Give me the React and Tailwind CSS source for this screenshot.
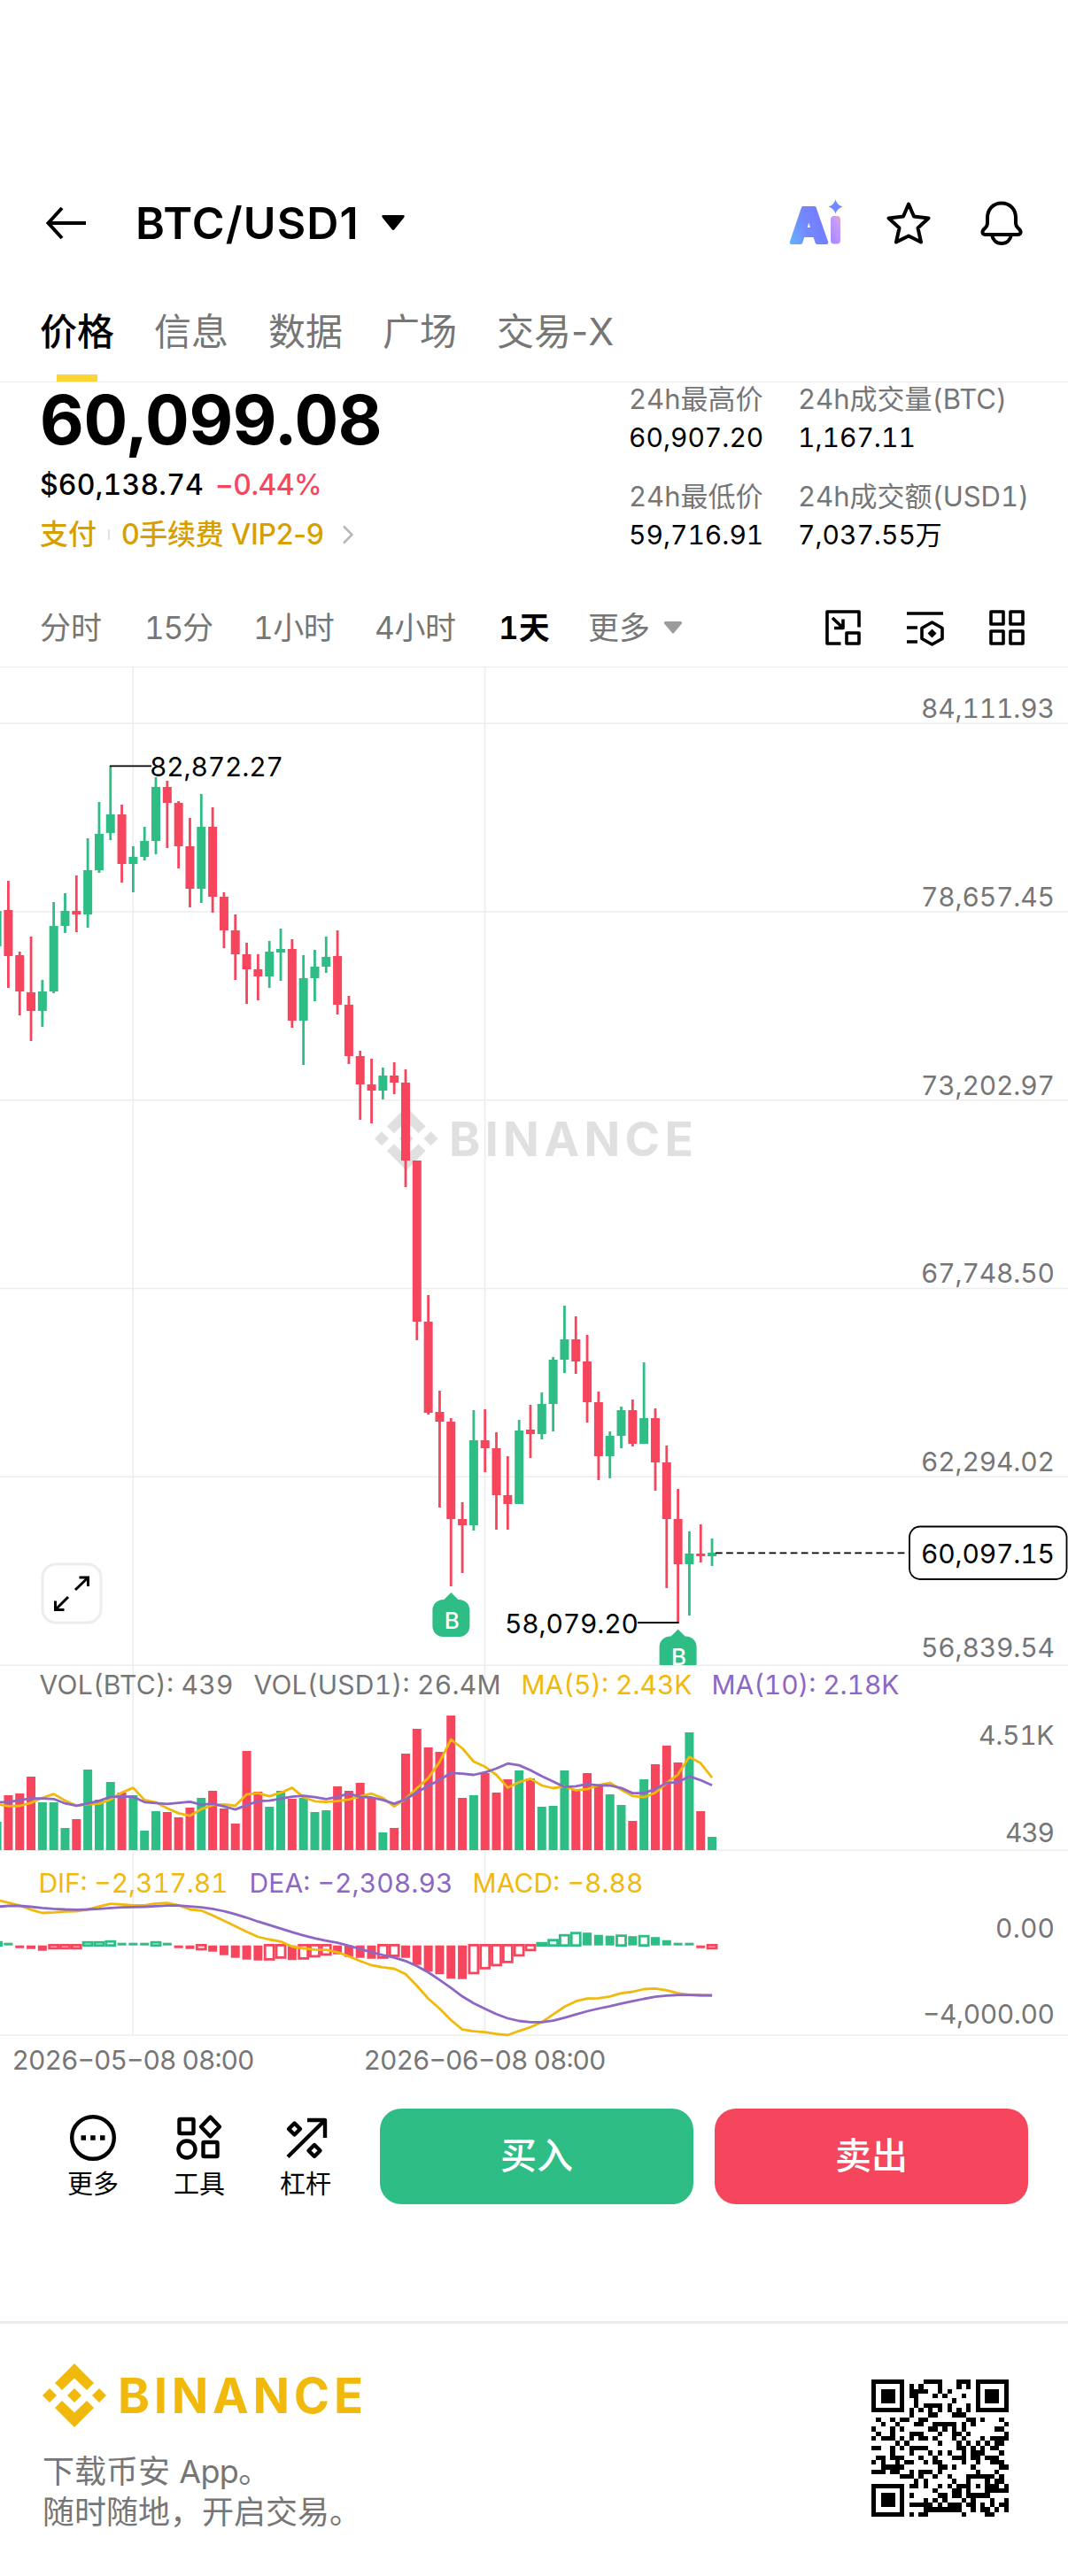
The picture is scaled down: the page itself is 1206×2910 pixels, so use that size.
import { useState } from 'react'

const UP = '#2ebd85'
const DOWN = '#f6465d'
const YELLOW = '#f0b90b'
const PURPLE = '#8d67c4'
const GREY = '#767676'

const STEP = 12.817
const X0 = 9.4
const VOL_BASE = 2090
const MACD_ZERO = 2197.7

// [up?, high, bodyTop, bodyBottom, low, volume]
const candles = [
  [1, 1029, 1029, 1069, 1069, 32], [0, 995, 1028, 1080, 1116, 62], [0, 1075, 1079, 1120, 1147, 64],
  [0, 1058, 1121, 1142, 1176, 83], [1, 1107, 1120, 1142, 1160, 54], [1, 1019, 1046, 1120, 1122, 54],
  [1, 1009, 1029, 1046, 1054, 25], [0, 989, 1029, 1033, 1053, 35], [1, 947, 983, 1033, 1048, 91],
  [1, 906, 942, 983, 986, 57], [1, 865, 920, 941, 949, 77], [0, 909, 920, 976, 997, 65],
  [1, 956, 968, 976, 1008, 62], [1, 934, 950, 968, 972, 22], [1, 878, 889, 950, 965, 44],
  [0, 882, 889, 907, 958, 43], [0, 905, 907, 956, 981, 37], [0, 924, 956, 1004, 1025, 48],
  [1, 897, 934, 1004, 1020, 59], [0, 912, 934, 1013, 1031, 67], [0, 1008, 1013, 1051, 1071, 47],
  [0, 1033, 1051, 1078, 1107, 30], [0, 1065, 1078, 1095, 1134, 112], [0, 1078, 1095, 1103, 1130, 66],
  [1, 1063, 1075, 1103, 1116, 49], [1, 1049, 1072, 1076, 1108, 67], [0, 1061, 1072, 1153, 1161, 58],
  [1, 1079, 1105, 1153, 1203, 59], [1, 1073, 1092, 1105, 1131, 43], [1, 1058, 1081, 1092, 1099, 45],
  [0, 1051, 1080, 1135, 1146, 72], [0, 1125, 1135, 1193, 1202, 67], [0, 1187, 1193, 1225, 1265, 76],
  [0, 1196, 1225, 1232, 1269, 59], [1, 1206, 1215, 1232, 1242, 20], [0, 1200, 1215, 1223, 1236, 25],
  [0, 1208, 1223, 1311, 1341, 109], [0, 1311, 1311, 1493, 1514, 137], [0, 1463, 1493, 1596, 1598, 116],
  [0, 1571, 1595, 1606, 1703, 111], [0, 1602, 1606, 1716, 1792, 152], [0, 1697, 1716, 1723, 1777, 59],
  [1, 1593, 1627, 1723, 1729, 62], [0, 1592, 1627, 1636, 1663, 87], [0, 1618, 1636, 1689, 1728, 65],
  [0, 1645, 1689, 1699, 1728, 80], [1, 1604, 1616, 1699, 1699, 90], [0, 1587, 1615, 1620, 1647, 81],
  [1, 1573, 1586, 1620, 1626, 49], [1, 1533, 1536, 1586, 1617, 50], [1, 1475, 1513, 1536, 1551, 90],
  [0, 1487, 1513, 1538, 1552, 68], [0, 1508, 1538, 1584, 1607, 87], [0, 1572, 1584, 1645, 1672, 72],
  [1, 1617, 1622, 1645, 1670, 63], [1, 1589, 1593, 1622, 1636, 51], [0, 1581, 1593, 1631, 1634, 33],
  [1, 1539, 1602, 1631, 1631, 80], [0, 1591, 1602, 1652, 1684, 97], [0, 1633, 1652, 1716, 1794, 118],
  [0, 1682, 1716, 1767, 1834, 99], [1, 1730, 1755, 1767, 1825, 133], [0, 1722, 1755, 1758, 1765, 44],
  [1, 1738, 1754, 1758, 1769, 15],
]

// volumes just left of the visible range, needed for the averages
const history = [60, 44, 63, 54, 60, 74, 62, 66, 26]

const hist = [
  5, 3, -3, -4, -6, -5, -5, -5, 5, 5, 6, 3, 3, 3, 5, 3, -3, -4, -6, -7, -11, -14, -16, -17, -17.5, -15.5,
  -16.5, -16.5, -14, -12, -10, -13, -14, -15, -15.5, -13.5, -14, -22, -29.5, -32.5, -37.5, -38, -33, -27.5,
  -24, -20.5, -13, -7, 4, 7.5, 13, 15.5, 14.5, 12, 11, 12.5, 10.5, 12, 9.5, 6, 3, 3, -3, -5,
]
const hollow = new Set([-1, 4, 5, 6, 7, 8, 9, 13, 17, 23, 24, 26, 27, 28, 33, 34, 41, 42, 43, 44, 45, 46, 47, 48, 49, 50, 54, 56, 62])

// thirds of a pixel below y=1870
const dif = [
  829, 838, 848, 862, 873, 871, 868, 867, 861, 851, 842, 844, 847, 847, 841, 839, 847, 861, 865, 881, 899,
  918, 937, 954, 963, 970, 987, 993, 997, 998, 1006, 1020, 1036, 1050, 1057, 1062, 1080, 1120, 1163, 1197,
  1236, 1268, 1274, 1277, 1283, 1287, 1273, 1260, 1243, 1217, 1191, 1172, 1163, 1162, 1156, 1145, 1140,
  1131, 1129, 1135, 1145, 1150, 1152, 1153,
]
const dea = [
  852, 849, 849, 852, 856, 859, 861, 862, 861, 859, 856, 854, 853, 852, 850, 848, 848, 851, 854, 859, 867,
  877, 889, 902, 914, 926, 938, 949, 959, 967, 974, 984, 995, 1006, 1016, 1024, 1036, 1053, 1074, 1100,
  1127, 1156, 1179, 1198, 1216, 1230, 1239, 1243, 1243, 1238, 1228, 1217, 1206, 1197, 1189, 1180, 1172,
  1164, 1157, 1153, 1151, 1151, 1152, 1152,
]

const xAt = i => X0 + (i - 1) * STEP
const toPoints = ys => ys.map((y, i) => `${xAt(i).toFixed(1)},${y.toFixed(1)}`).join(' ')

function movingAverage(n) {
  const all = [...history, ...candles.map(c => c[5])]
  return candles.map((_, i) => {
    const end = i + history.length + 1
    const part = all.slice(end - n, end)
    return VOL_BASE - part.reduce((a, b) => a + b, 0) / part.length
  })
}

const tabs = ['价格', '信息', '数据', '广场', '交易-X']

const stats = [
  { label: '24h最高价', value: '60,907.20' },
  { label: '24h成交量(BTC)', value: '1,167.11' },
  { label: '24h最低价', value: '59,716.91' },
  { label: '24h成交额(USD1)', value: '7,037.55万' },
]

const priceAxis = [
  ['84,111.93', 811], ['78,657.45', 1024], ['73,202.97', 1237],
  ['67,748.50', 1449], ['62,294.02', 1662], ['56,839.54', 1872],
]

const legends = [
  ['VOL(BTC): 439', 44.5, 1914, 219, GREY],
  ['VOL(USD1): 26.4M', 286.5, 1914, 279, GREY],
  ['MA(5): 2.43K', 588.5, 1914, 193, YELLOW],
  ['MA(10): 2.18K', 803.5, 1914, 212, PURPLE],
  ['DIF: −2,317.81', 43.5, 2138, 214, YELLOW],
  ['DEA: −2,308.93', 281.5, 2138, 230, PURPLE],
  ['MACD: −8.88', 533.5, 2138, 193, YELLOW],
]

function ChartText({ x, y, w, fill = GREY, children }) {
  return (
    <text x={x} y={y} textLength={w} fill={fill} fontSize="30">
      {children}
    </text>
  )
}

function BinanceMark({ x, y, size, className }) {
  return (
    <svg x={x} y={y} width={size} height={size} viewBox="0 0 72 72" className={className} fill="currentColor">
      <path d="M36 0 58 22 50 30 36 16.5 22 30 14 22ZM36 72 58 50 50 42 36 55.5 22 42 14 50ZM0 36 8 28 16 36 8 44ZM56 36 64 28 72 36 64 44ZM28 36 36 28 44 36 36 44Z" />
    </svg>
  )
}

function BuyMarker({ x, y }) {
  return (
    <g>
      <path
        d={`M${x} ${y} l8 8 h1 a12 12 0 0 1 12 12 v18 a12 12 0 0 1 -12 12 h-18 a12 12 0 0 1 -12 -12 v-18 a12 12 0 0 1 12 -12 h1 z`}
        fill={UP}
      />
      <text x={x + 1} y={y + 40.5} textAnchor="middle" fontSize="26" fontWeight="500" fill="#fff">B</text>
    </g>
  )
}

function Chart() {
  return (
    <svg width="1206" height="1606" viewBox="0 754 1206 1606" className="block shrink-0 tabular-nums">
      <defs>
        <clipPath id="main"><rect x="0" y="754" width="1206" height="1127" /></clipPath>
      </defs>

      <g stroke="#ededed" strokeWidth="1.6">
        {[817.2, 1030, 1242.7, 1455.5, 1668.3, 1881.3, 2090.3, 2299].map(y => (
          <line key={y} x1="0" x2="1206" y1={y} y2={y} />
        ))}
        {[150.3, 547.6].map(x => (
          <line key={x} x1={x} x2={x} y1="754" y2="2299" />
        ))}
      </g>

      <BinanceMark x={423} y={1250.5} size={71.5} className="text-[#e0e0e0]" />
      <text x="507" y="1305.5" textLength="276" fontSize="53.5" fontWeight="700" fill="#e0e0e0">BINANCE</text>

      {candles.map(([up, high, top, bottom, low], i) => (
        <g key={i} fill={up ? UP : DOWN}>
          <rect x={xAt(i) - 1.4} y={high} width="2.8" height={low - high} />
          <rect x={xAt(i) - 5} y={top} width="10" height={bottom - top} />
        </g>
      ))}

      {priceAxis.map(([label, y]) => (
        <ChartText key={label} x={1040} y={y} w={151}>{label}</ChartText>
      ))}

      <path d="M124 865.3H171M720 1833H766.5" stroke="#000" strokeWidth="1.8" />
      <ChartText x={169} y={876.5} w={151} fill="#000">82,872.27</ChartText>
      <ChartText x={570} y={1844.5} w={151} fill="#000">58,079.20</ChartText>

      <g clipPath="url(#main)">
        <BuyMarker x={509.4} y={1799} />
        <BuyMarker x={765.6} y={1840.6} />
      </g>

      <line x1="808" x2="1026" y1="1754.3" y2="1754.3" stroke="#000" strokeWidth="1.8" strokeDasharray="7.7 4.4" />
      <rect x="1027" y="1724.5" width="177.5" height="59.5" rx="12" fill="#fff" stroke="#000" strokeWidth="1.8" />
      <ChartText x={1040} y={1765.5} w={151} fill="#000">60,097.15</ChartText>

      <rect x="48" y="1767" width="66" height="66" rx="15" fill="#fff" stroke="#ededed" strokeWidth="3" />
      <path d="M85 1796 99.5 1782M89.5 1782H99.5V1792M77 1804 62.5 1818.5M62.5 1808.5V1818.5H72.5" fill="none" stroke="#000" strokeWidth="3" />

      {candles.map(([up, , , , , vol], i) => (
        <rect key={i} x={xAt(i) - 5} y={VOL_BASE - vol} width="10" height={vol} fill={up ? UP : DOWN} />
      ))}
      <g fill="none" strokeWidth="2.8" strokeLinejoin="round">
        <polyline points={toPoints(movingAverage(5))} stroke={YELLOW} />
        <polyline points={toPoints(movingAverage(10))} stroke={PURPLE} />
      </g>

      {hist.map((v, i) => {
        const color = v > 0 ? UP : DOWN
        const h = Math.abs(v)
        if (hollow.has(i - 1)) {
          const y = v > 0 ? MACD_ZERO - h + 1.5 : MACD_ZERO - 0.3
          return <rect key={i} x={xAt(i) - 5} y={y} width="10" height={h - 1.5} fill="#fff" stroke={color} strokeWidth="2.8" />
        }
        return <rect key={i} x={xAt(i) - 5} y={v > 0 ? MACD_ZERO - h : MACD_ZERO} width="10" height={h} fill={color} />
      })}
      <g fill="none" strokeWidth="2.8" strokeLinejoin="round">
        <polyline points={toPoints(dif.map(v => 1870 + v / 3))} stroke={YELLOW} />
        <polyline points={toPoints(dea.map(v => 1870 + v / 3))} stroke={PURPLE} />
      </g>

      {legends.map(([label, x, y, w, color]) => (
        <ChartText key={label} x={x} y={y} w={w} fill={color}>{label}</ChartText>
      ))}

      <ChartText x={1105} y={1970.7} w={85.5}>4.51K</ChartText>
      <ChartText x={1135} y={2080.7} w={56}>439</ChartText>
      <ChartText x={1124} y={2189} w={67}>0.00</ChartText>
      <ChartText x={1042} y={2285.5} w={149}>−4,000.00</ChartText>
      <ChartText x={13.5} y={2337.5} w={274}>2026−05−08 08:00</ChartText>
      <ChartText x={410.5} y={2337.5} w={274}>2026−06−08 08:00</ChartText>
    </svg>
  )
}

function AiLogo() {
  return (
    <svg width="62" height="56" viewBox="0 0 62 56" className="overflow-visible">
      <defs>
        <linearGradient id="ai-a" x1="0" y1="1" x2="1" y2="0.3">
          <stop offset="0" stopColor="#62b8ff" />
          <stop offset="0.5" stopColor="#7388ff" />
          <stop offset="1" stopColor="#7478ff" />
        </linearGradient>
        <linearGradient id="ai-i" x1="1" y1="0" x2="0.3" y2="1">
          <stop offset="0" stopColor="#f6a98e" />
          <stop offset="0.3" stopColor="#c79df8" />
          <stop offset="1" stopColor="#a98bff" />
        </linearGradient>
      </defs>
      <text x="1.5" y="49.5" fontSize="53" fontWeight="800" textLength="42" lengthAdjust="spacingAndGlyphs" fill="url(#ai-a)" stroke="url(#ai-a)" strokeWidth="4" strokeLinejoin="round">A</text>
      <rect x="47" y="20" width="11" height="31.500" rx="4" fill="url(#ai-i)" />
      <path d="M52.500 1.500q1.800 6.200 8 8-6.200 1.800-8 8-1.800-6.200-8-8 6.200-1.800 8-8Z" fill="#6f8cff" />
    </svg>
  )
}

function Header() {
  return (
    <header className="flex h-[104px] items-center pr-[50px] pl-[50px]">
      <svg width="50" height="40" viewBox="0 0 50 40" fill="none" stroke="#000" strokeWidth="4">
        <path d="M20 3 4.500 20 20 37M4.500 20H47" />
      </svg>
      <h1 className="ml-[53px] text-[50px] leading-none font-semibold tracking-[1.1px]">BTC/USD1</h1>
      <svg width="28" height="20" viewBox="0 0 28 20" className="ml-[24px]">
        <path d="M3 1H25Q28 1 26 4L15.500 17Q14 19 12.500 17L2 4Q0 1 3 1Z" />
      </svg>
      <div className="ml-auto flex items-center">
        <AiLogo />
        <svg width="52" height="50" viewBox="0 0 52 50" className="ml-[47px]" fill="none" stroke="#000" strokeWidth="4" strokeLinejoin="round">
          <path d="M26 3.500 32 17.500 48.500 19.500 36.500 30.500 40 46.500 26 39.500 12 46.500 15.500 30.500 3.500 19.500 20 17.500Z" />
        </svg>
        <svg width="50" height="52" viewBox="0 0 50 52" className="ml-[54px]" fill="none" stroke="#000" strokeWidth="4" strokeLinejoin="round">
          <path d="M25 3.500C15 3.500 9 11 9 20V25C9 29 8 30 4.500 33.500 2.500 36 3.500 39 6.500 39H43.500C46.500 39 47.500 36 45.500 33.500 42 30 41 29 41 25V20C41 11 35 3.500 25 3.500ZM14 39C15 45 19 49 25 49S35 45 36 39" />
        </svg>
      </div>
    </header>
  )
}

function Summary() {
  return (
    <section className="flex h-[231px] justify-between pl-[45px]">
      <div>
        <div className="mt-[4px] text-[77px] leading-[76px] font-bold tracking-[-0.4px] tabular-nums">60,099.08</div>
        <div className="mt-[15px] flex gap-[13px] text-[32px] leading-[42px] font-medium tabular-nums">
          <span className="tracking-[0.2px]">$60,138.74</span>
          <span className="tracking-[-0.5px] text-[#f6465d]">−0.44%</span>
        </div>
        <div className="mt-[14px] flex items-center text-[32px] leading-[42px] font-medium text-[#d89f00]">
          <span>支付</span>
          <i className="mx-[13px] h-[12px] w-[2px] bg-[#e2e2e2]" />
          <span className="tracking-[-0.3px]">0手续费 VIP2-9</span>
          <svg width="14" height="22" viewBox="0 0 14 22" className="ml-[20px]" fill="none" stroke="#b8b8b8" strokeWidth="2.5">
            <path d="M2 1.500 11.500 11 2 20.500" />
          </svg>
        </div>
      </div>
      <dl className="grid w-[496px] grid-cols-[191px_1fr] grid-rows-[110px_110px] text-[31px] tabular-nums">
        {stats.map(s => (
          <div key={s.label} className="whitespace-nowrap">
            <dt className="h-[40px] leading-[38px] text-[#767676]">{s.label}</dt>
            <dd className="h-[50px] text-[30px] leading-[44px]">{s.value}</dd>
          </div>
        ))}
      </dl>
    </section>
  )
}

function Intervals() {
  return (
    <nav className="flex h-[91px] items-center justify-between border-b border-[#ebebeb] pr-[48px] pl-[45px]">
      <div className="flex items-center pt-px text-[35px] leading-[50px] text-[#767676] tabular-nums">
        <span className="w-[118px]">分时</span>
        <span className="w-[123px] tracking-[-1.2px]">15分</span>
        <span className="w-[137px] tracking-[-0.5px]">1小时</span>
        <span className="w-[140px] tracking-[-0.3px]">4小时</span>
        <span className="w-[101px] font-semibold text-black">1天</span>
        <span>更多</span>
        <svg width="22" height="14" viewBox="0 0 22 14" className="ml-[15px]" fill="#9c9c9c">
          <path d="M2 0H20Q22 1 20.500 3L12 13Q11 14 10 13L1.500 3Q0 1 2 0Z" />
        </svg>
      </div>
      <div className="flex items-center gap-[50px] pt-[2px]">
        <svg width="42" height="42" viewBox="0 0 42 42" fill="none" stroke="#000" strokeWidth="3.6" strokeLinejoin="round">
          <path d="M18.500 39H3V3H39V20.500M9 10 20 20.500M11 21.500H21V11.500" strokeLinecap="butt" />
          <rect x="25" y="27" width="14" height="12" />
        </svg>
        <svg width="43" height="42" viewBox="0 0 43 42" fill="none" stroke="#000" strokeWidth="3.6" strokeLinejoin="round">
          <path d="M1 5H42M1 21H13M1 37H13M29.500 15 41 21.500V33.500L29.500 40 18 33.500V21.500Z" />
          <path d="M29.500 22.500 34.500 27.500 29.500 32.500 24.500 27.500Z" fill="#000" stroke="none" />
        </svg>
        <svg width="42" height="42" viewBox="0 0 42 42" fill="none" stroke="#000" strokeWidth="3.6" strokeLinejoin="round">
          <rect x="3" y="3" width="14" height="14" />
          <rect x="25" y="3" width="14" height="14" />
          <rect x="3" y="25" width="14" height="14" />
          <rect x="25" y="25" width="14" height="14" />
        </svg>
      </div>
    </nav>
  )
}

function Action({ label, children }) {
  return (
    <div className="flex w-[120px] flex-col items-center">
      <svg width="56" height="56" viewBox="0 0 56 56" fill="none" stroke="#000" strokeWidth="4.400" strokeLinejoin="round">
        {children}
      </svg>
      <span className="mt-[5px] text-[29px] leading-[40px]">{label}</span>
    </div>
  )
}

function ActionBar() {
  return (
    <section className="flex h-[262px] items-start pt-[22px] pl-[45px]">
      <div className="flex pt-[5px]">
        <Action label="更多">
          <circle cx="28" cy="28" r="23.800" />
          <path d="M14.500 28h5.500M25.200 28h5.500M36 28h5.500" strokeWidth="5.500" />
        </Action>
        <Action label="工具">
          <rect x="5.500" y="7" width="16" height="16" rx="1" />
          <path d="M40.500 4.500 51 15.500 40.500 26.500 30 15.500Z" />
          <circle cx="14" cy="41" r="9.500" />
          <rect x="32.500" y="33" width="16" height="16" rx="1" />
        </Action>
        <Action label="杠杆">
          <path d="M8 49.500 49 9M30 8H50V28" />
          <path d="M15.500 11.500 22 18 15.500 24.500 9 18ZM38 36 44.500 42.500 38 49 31.500 42.500Z" />
        </Action>
      </div>
      <button className="ml-[24px] h-[108px] w-[354px] rounded-[24px] bg-[#2ebd85] text-[41px] font-medium text-white">买入</button>
      <button className="ml-[24px] h-[108px] w-[354px] rounded-[24px] bg-[#f6465d] text-[41px] font-medium text-white">卖出</button>
    </section>
  )
}

function isDark(r, c) {
  const finder = (y, x) => {
    const d = Math.max(Math.abs(y - 3), Math.abs(x - 3))
    return d === 3 || d <= 1
  }
  if (r < 8 && c < 8) return r < 7 && c < 7 && finder(r, c)
  if (r < 8 && c > 20) return r < 7 && c > 21 && finder(r, c - 22)
  if (r > 20 && c < 8) return r > 21 && c < 7 && finder(r - 22, c)
  const a = Math.max(Math.abs(r - 22), Math.abs(c - 22))
  if (a <= 2) return a !== 1
  if (r === 6 || c === 6) return (r + c) % 2 === 0
  return (r * 73 + c * 151 + r * c * 31 + ((r * r * 7) ^ (c * c * 13))) % 7 < 3
}

function QrCode() {
  const cells = []
  for (let r = 0; r < 29; r++) {
    for (let c = 0; c < 29; c++) if (isDark(r, c)) cells.push(`M${c} ${r}h1v1h-1z`)
  }
  return (
    <svg width="155" height="155" viewBox="0 0 29 29" shapeRendering="crispEdges">
      <path d={cells.join('')} />
    </svg>
  )
}

function Footer() {
  return (
    <footer className="flex h-[288px] justify-between border-t-[3px] border-[#ebebeb] pr-[67px] pl-[48px]">
      <div className="pt-[45px]">
        <div className="flex h-[72px] items-center text-[#f0b90b]">
          <BinanceMark size={72} />
          <svg width="290" height="72" className="ml-[12px] overflow-visible" fill="currentColor">
            <text x="1" y="56" textLength="277" fontSize="54.500" fontWeight="700">BINANCE</text>
          </svg>
        </div>
        <p className="mt-[27px] text-[36px] leading-[46px] text-[#767676]">
          下载币安 <span className="tracking-[-0.6px]">App</span>。
          <br />
          随时随地，开启交易。
        </p>
      </div>
      <div className="pt-[63px]">
        <QrCode />
      </div>
    </footer>
  )
}

export default function App() {
  const [tab, setTab] = useState(tabs[0])

  return (
    <div className="h-[2910px] w-[1206px] overflow-hidden bg-white pt-[200px] font-['Inter','Noto_Sans_CJK_SC',sans-serif] text-black">
      <Header />
      <nav className="flex h-[128px] gap-[45px] border-b border-[#ebebeb] pl-[45px]">
        {tabs.map(t => (
          <button
            key={t}
            onClick={() => setTab(t)}
            className={`flex flex-col items-center pt-[41px] text-[42px] leading-[60px] ${t === tab ? 'font-medium text-black' : 'text-[#767676]'}`}
          >
            {t}
            {t === tab && <i className="mt-auto h-[8px] w-[46px] bg-[#fcd535]" />}
          </button>
        ))}
      </nav>
      <Summary />
      <Intervals />
      <Chart />
      <ActionBar />
      <Footer />
    </div>
  )
}
